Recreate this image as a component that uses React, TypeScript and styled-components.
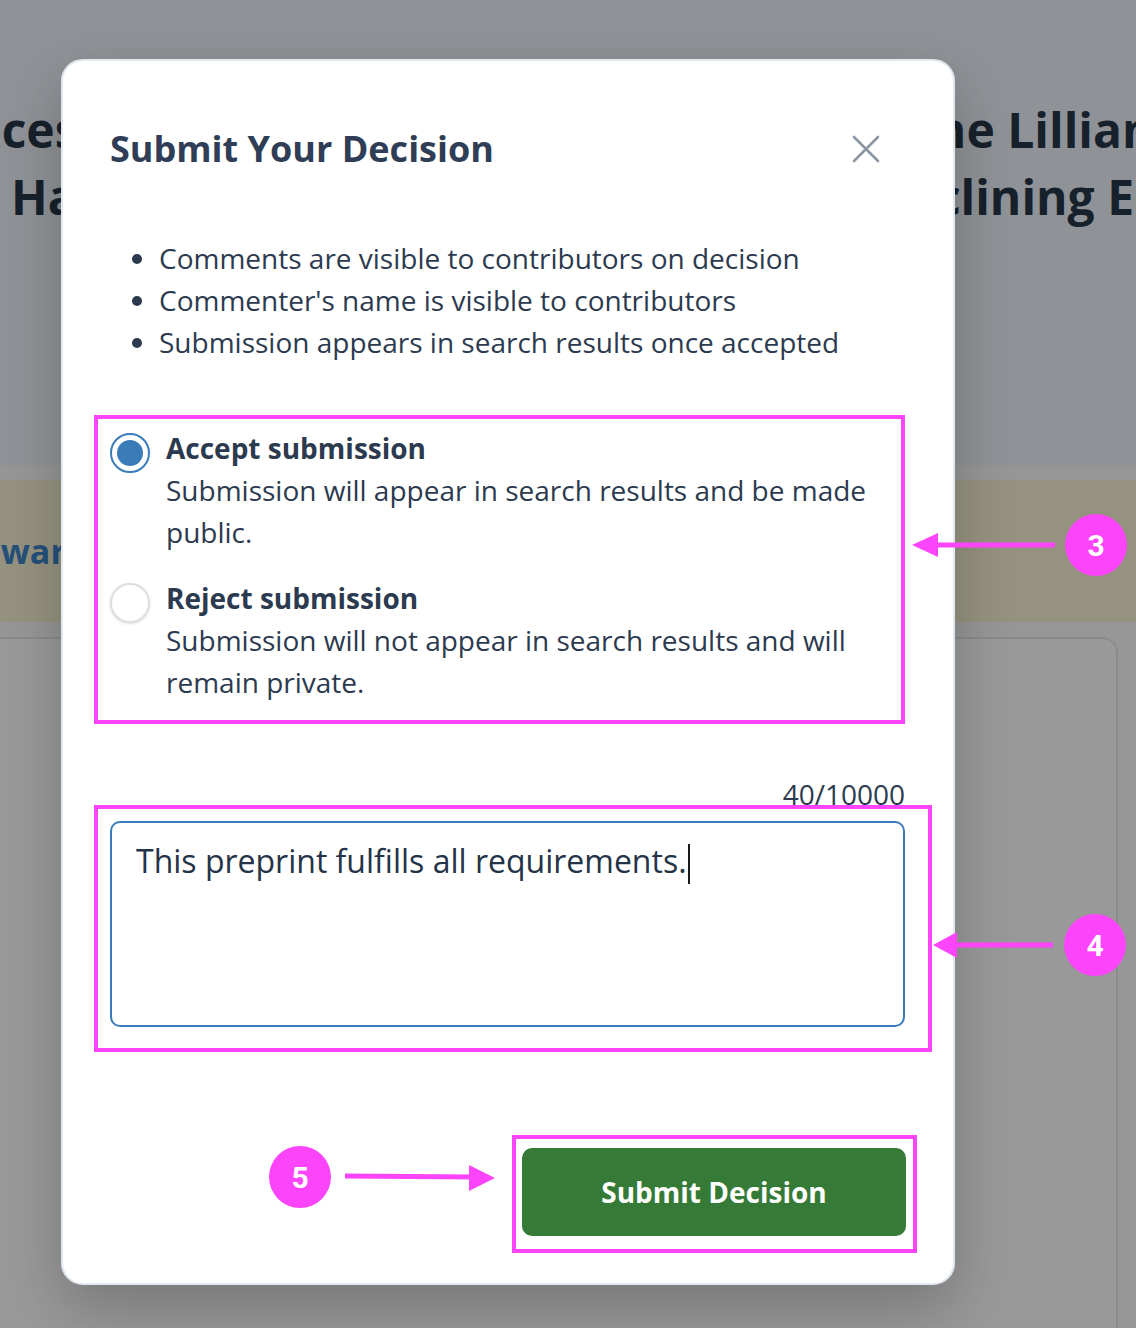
import styled, { createGlobalStyle } from "styled-components";
import { ReactElement } from "react";

const GlobalStyle = createGlobalStyle`
  html, body {
    margin: 0;
    padding: 0;
    background: #979797;
  }
  * {
    box-sizing: border-box;
  }
`;

const magenta = "#fc45fb";
const ink = "#2c3a4f";

const Page = styled.div`
  position: relative;
  width: 1136px;
  height: 1328px;
  overflow: hidden;
  font-family: "Open Sans", "Noto Sans", sans-serif;
  background: #979797;
`;

// page behind the dialog, already dimmed by the overlay
const Hero = styled.div`
  height: 465px;
  background: #8f9296;
  padding-top: 96px;
  display: grid;
  grid-template-columns: 870px 1fr;
`;

const HeroColumn = styled.div`
  font-size: 48px;
  font-weight: 700;
  line-height: 67px;
  color: #17212b;
`;

const HeroLine = styled.div<{ $indent: number }>`
  margin-left: ${(p) => p.$indent}px;
  white-space: nowrap;
`;

const Strip = styled.div`
  height: 15px;
  background: #969696;
`;

const Banner = styled.div`
  height: 142px;
  background: #95927f;
  display: flex;
  align-items: center;
`;

const BannerLink = styled.span`
  margin-left: -40px;
  font-size: 34px;
  font-weight: 700;
  color: #24507a;
  white-space: nowrap;
`;

const CardArea = styled.div`
  height: 700px;
  padding-right: 18px;
`;

const Card = styled.div`
  height: 100%;
  margin-left: -20px;
  background: #999999;
  border-top: 2px solid #8b8b8b;
  border-right: 2px solid #8b8b8b;
  border-top-right-radius: 16px;
`;

// dialog
const Modal = styled.div`
  position: absolute;
  top: 59px;
  left: 61px;
  width: 894px;
  background: #ffffff;
  border: 2px solid #e2e8f0;
  border-radius: 22px;
  box-shadow: 0 24px 60px rgba(0, 0, 0, 0.22);
  padding: 64px 48px 30px 47px;
  color: ${ink};
`;

const Header = styled.div`
  display: flex;
  align-items: center;
  justify-content: space-between;
  height: 48px;
`;

const Title = styled.h2`
  margin: 0;
  font-size: 36px;
  font-weight: 700;
  line-height: 48px;
  color: #2f3e56;
`;

const CloseButton = styled.button`
  border: 0;
  background: none;
  padding: 0;
  margin-right: 24px;
  width: 30px;
  height: 30px;
  display: flex;
  align-items: center;
  justify-content: center;
  cursor: pointer;
`;

const Notes = styled.ul`
  margin: 64px 0 0;
  padding-left: 49px;
  font-size: 28px;
  line-height: 42px;
`;

const Highlight = styled.div<{ $pad: string; $margin: string }>`
  border: 4px solid ${magenta};
  padding: ${(p) => p.$pad};
  margin: ${(p) => p.$margin};
`;

const RadioList = styled.div`
  display: flex;
  flex-direction: column;
  gap: 24px;
`;

const RadioItem = styled.label`
  display: grid;
  grid-template-columns: 40px 1fr;
  column-gap: 16px;
  font-size: 28px;
  line-height: 42px;
  cursor: pointer;
`;

const RadioMark = styled.span<{ $checked?: boolean }>`
  width: 40px;
  height: 40px;
  margin-top: 6px;
  border-radius: 50%;
  background: #fff;
  border: 2px solid ${(p) => (p.$checked ? "#3a7bba" : "#dedede")};
  box-shadow: ${(p) => (p.$checked ? "none" : "0 1px 3px rgba(0,0,0,0.12)")};
  display: flex;
  align-items: center;
  justify-content: center;

  &::after {
    content: "";
    width: 26px;
    height: 26px;
    border-radius: 50%;
    background: ${(p) => (p.$checked ? "#3a7bba" : "transparent")};
  }
`;

const RadioTitle = styled.div`
  font-weight: 700;
`;

const Counter = styled.div`
  margin-top: 55px;
  text-align: right;
  font-size: 28px;
  line-height: 30px;
`;

const TextBox = styled.div`
  height: 206px;
  border: 2px solid #3a7bba;
  border-radius: 10px;
  padding: 16px 24px;
  font-size: 32px;
  line-height: 44px;
  color: #243347;
`;

const Caret = styled.span`
  display: inline-block;
  width: 2px;
  height: 40px;
  margin-left: 1px;
  vertical-align: middle;
  background: #1a1a1a;
`;

const Footer = styled.div`
  margin-top: 83px;
  display: flex;
  justify-content: flex-end;
`;

const SubmitButton = styled.button`
  width: 384px;
  height: 88px;
  border: 0;
  border-radius: 10px;
  background: #367a37;
  color: #fff;
  font-family: "Open Sans", "Noto Sans", sans-serif;
  font-size: 28px;
  font-weight: 700;
  cursor: pointer;
`;

// annotation callouts over the screenshot
const Badge = styled.div<{ $x: number; $y: number }>`
  position: absolute;
  left: ${(p) => p.$x - 31}px;
  top: ${(p) => p.$y - 31}px;
  width: 62px;
  height: 62px;
  border-radius: 50%;
  background: ${magenta};
  color: #fff;
  font-family: Roboto, "Liberation Sans", sans-serif;
  font-size: 30px;
  font-weight: 700;
  display: flex;
  align-items: center;
  justify-content: center;
`;

const ArrowLayer = styled.svg`
  position: absolute;
  inset: 0;
  pointer-events: none;
`;

const notes = [
  "Comments are visible to contributors on decision",
  "Commenter's name is visible to contributors",
  "Submission appears in search results once accepted",
];

const options = [
  {
    title: "Accept submission",
    text: "Submission will appear in search results and be made public.",
    checked: true,
  },
  {
    title: "Reject submission",
    text: "Submission will not appear in search results and will remain private.",
    checked: false,
  },
];

const App = (): ReactElement => {
  return (
    <Page>
      <GlobalStyle />
      <Hero>
        <HeroColumn>
          <HeroLine $indent={-80}>Processes of</HeroLine>
          <HeroLine $indent={11}>Habitats in</HeroLine>
        </HeroColumn>
        <HeroColumn>
          <HeroLine $indent={44}>the Lillian</HeroLine>
          <HeroLine $indent={2}>Declining Ecosystems</HeroLine>
        </HeroColumn>
      </Hero>
      <Strip />
      <Banner>
        <BannerLink>Toward</BannerLink>
      </Banner>
      <Strip />
      <CardArea>
        <Card />
      </CardArea>

      <Modal role="dialog" aria-modal="true">
        <Header>
          <Title>Submit Your Decision</Title>
          <CloseButton aria-label="Close">
            <svg width="28" height="28" viewBox="0 0 28 28">
              <path d="M2 2 L26 26 M26 2 L2 26" stroke="#8c96a3" strokeWidth="2.6" strokeLinecap="round" />
            </svg>
          </CloseButton>
        </Header>

        <Notes>
          {notes.map((n) => (
            <li key={n}>{n}</li>
          ))}
        </Notes>

        <Highlight $margin="52px 0 0 -16px" $pad="8px 12px 17px 12px">
          <RadioList>
            {options.map((o) => (
              <RadioItem key={o.title}>
                <RadioMark $checked={o.checked} />
                <div>
                  <RadioTitle>{o.title}</RadioTitle>
                  <div>{o.text}</div>
                </div>
              </RadioItem>
            ))}
          </RadioList>
        </Highlight>

        <Counter>40/10000</Counter>
        <Highlight $margin="-4px -27px 0 -16px" $pad="12px 23px 21px 12px">
          <TextBox role="textbox">
            This preprint fulfills all requirements.
            <Caret />
          </TextBox>
        </Highlight>

        <Footer>
          <Highlight $margin="0 -12px 0 0" $pad="9px 7px 13px 6px">
            <SubmitButton>Submit Decision</SubmitButton>
          </Highlight>
        </Footer>
      </Modal>

      <ArrowLayer width="1136" height="1328" viewBox="0 0 1136 1328">
        <g fill={magenta} stroke={magenta}>
          <line x1="1055" y1="545" x2="930" y2="545" strokeWidth="5" />
          <polygon points="912,545 938,533 938,557" stroke="none" />
          <line x1="1053" y1="945" x2="950" y2="945" strokeWidth="5" />
          <polygon points="933,945 957,932 957,958" stroke="none" />
          <line x1="345" y1="1176" x2="475" y2="1177" strokeWidth="5" />
          <polygon points="495,1178 469,1165 469,1191" stroke="none" />
        </g>
      </ArrowLayer>
      <Badge $x={1096} $y={545}>3</Badge>
      <Badge $x={1095} $y={945}>4</Badge>
      <Badge $x={300} $y={1177}>5</Badge>
    </Page>
  );
};

export default App;
